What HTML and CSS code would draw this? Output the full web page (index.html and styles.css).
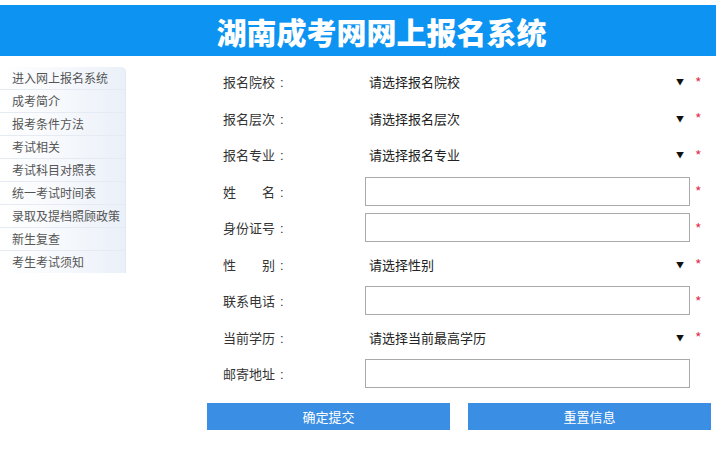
FILE: index.html
```html
<!DOCTYPE html>
<html lang="zh-CN">
<head>
    <meta charset="UTF-8">
    <meta name="viewport" content="width=device-width, initial-scale=1.0">
    <title>湖南成考网网上报名系统</title>
    <link rel="stylesheet" href="styles.css">
</head>
<body>
    <!-- Header -->
    <div class="header">
        <h1>湖南成考网网上报名系统</h1>
    </div>

    <div class="main">
        <!-- Side Menu -->
        <ul class="side-menu">
            <li><a href="#">进入网上报名系统</a></li>
            <li><a href="#">成考简介</a></li>
            <li><a href="#">报考条件方法</a></li>
            <li><a href="#">考试相关</a></li>
            <li><a href="#">考试科目对照表</a></li>
            <li><a href="#">统一考试时间表</a></li>
            <li><a href="#">录取及提档照顾政策</a></li>
            <li><a href="#">新生复查</a></li>
            <li><a href="#">考生考试须知</a></li>
        </ul>

        <!-- Signup Form -->
        <form class="signup-form">
            <div class="row">
                <label>报名院校<span class="colon">:</span></label>
                <div class="select-box">
                    <select><option>请选择报名院校</option></select>
                    <span class="arrow">▼</span>
                </div>
                <span class="star">*</span>
            </div>
            <div class="row">
                <label>报名层次<span class="colon">:</span></label>
                <div class="select-box">
                    <select><option>请选择报名层次</option></select>
                    <span class="arrow">▼</span>
                </div>
                <span class="star">*</span>
            </div>
            <div class="row">
                <label>报名专业<span class="colon">:</span></label>
                <div class="select-box">
                    <select><option>请选择报名专业</option></select>
                    <span class="arrow">▼</span>
                </div>
                <span class="star">*</span>
            </div>
            <div class="row">
                <label>姓&emsp;&emsp;名<span class="colon">:</span></label>
                <input type="text" class="text-input">
                <span class="star">*</span>
            </div>
            <div class="row">
                <label>身份证号<span class="colon">:</span></label>
                <input type="text" class="text-input">
                <span class="star">*</span>
            </div>
            <div class="row">
                <label>性&emsp;&emsp;别<span class="colon">:</span></label>
                <div class="select-box">
                    <select><option>请选择性别</option></select>
                    <span class="arrow">▼</span>
                </div>
                <span class="star">*</span>
            </div>
            <div class="row">
                <label>联系电话<span class="colon">:</span></label>
                <input type="text" class="text-input">
                <span class="star">*</span>
            </div>
            <div class="row">
                <label>当前学历<span class="colon">:</span></label>
                <div class="select-box">
                    <select><option>请选择当前最高学历</option></select>
                    <span class="arrow">▼</span>
                </div>
                <span class="star">*</span>
            </div>
            <div class="row">
                <label>邮寄地址<span class="colon">:</span></label>
                <input type="text" class="text-input">
                <span class="star"></span>
            </div>

            <div class="buttons">
                <button type="button">确定提交</button>
                <button type="reset">重置信息</button>
            </div>
        </form>
    </div>
</body>
</html>
```

FILE: styles.css
```css
body {
    margin: 0;
    padding: 0;
    background-color: #fff;
    font-family: "Noto Sans CJK SC", "Liberation Sans", sans-serif;
    font-size: 13px;
    color: #333;
}
.header {
    margin-top: 5px;
    height: 51px;
    background-color: #0d93f1;
    display: flex;
    align-items: center;
    justify-content: center;
    padding-left: 47px;
}
.header h1 {
    margin: 0;
    color: #fff;
    font-size: 30px;
    font-weight: 900;
    line-height: 1;
}
.main {
    display: flex;
    align-items: flex-start;
}
.side-menu {
    list-style: none;
    margin: 11px 0 0 0;
    padding: 0;
    width: 125px;
    background: linear-gradient(to right, #fff 0%, #f5f8fc 55%, #eaf0f9 100%);
    border-right: 1px solid #e3e9f3;
    border-top-right-radius: 5px;
}
.side-menu li {
    height: 22px;
    line-height: 22px;
    border-bottom: 1px solid #e6ebf3;
    padding-left: 12px;
}
.side-menu li:last-child {
    border-bottom: none;
}
.side-menu a {
    color: #555;
    font-size: 12px;
    text-decoration: none;
}
.signup-form {
    margin: 11px 0 0 81px;
    width: 504px;
}
.row {
    display: flex;
    align-items: center;
    height: 29px;
    margin-bottom: 7.5px;
}
.row label {
    width: 142px;
    padding-left: 16px;
    color: #333;
    font-size: 13px;
}
.colon {
    margin-left: 5px;
    font-family: "Liberation Sans", sans-serif;
}
.select-box {
    width: 325px;
    height: 29px;
    display: flex;
    align-items: center;
    background: #fff;
}
.select-box select {
    flex: 1;
    appearance: none;
    -webkit-appearance: none;
    border: none;
    background: transparent;
    font-family: inherit;
    font-size: 13px;
    color: #222;
    padding: 0 0 0 4px;
    height: 29px;
    outline: none;
}
.arrow {
    font-size: 8px;
    color: #111;
    margin-right: 6px;
}
.text-input {
    width: 325px;
    height: 29px;
    box-sizing: border-box;
    border: 1px solid #a9a9a9;
    padding: 0 4px;
    font-family: inherit;
    font-size: 13px;
    outline: none;
}
.star {
    color: #e2334f;
    font-size: 14px;
    margin-left: 5px;
}
.buttons {
    display: flex;
    gap: 18px;
    margin-top: 14.5px;
}
.buttons button {
    width: 243px;
    height: 27px;
    border: none;
    background-color: #3a8ee3;
    color: #fff;
    font-family: inherit;
    font-size: 13px;
    cursor: pointer;
}
.buttons button:hover {
    background-color: #5aa2ea;
}
```
